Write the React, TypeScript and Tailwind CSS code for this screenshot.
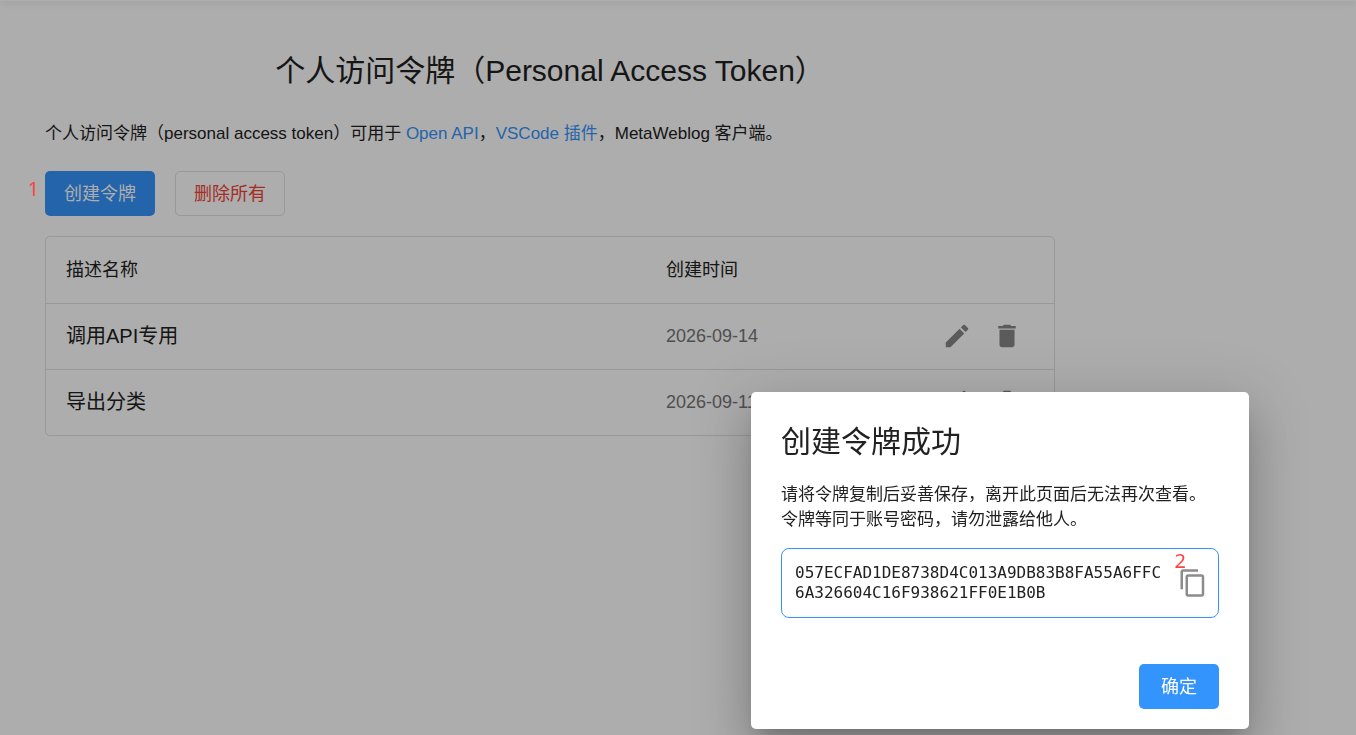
import { useState } from "react";
import { MdContentCopy, MdDelete, MdEdit } from "react-icons/md";

interface Token {
  id: number;
  name: string;
  createdAt: string;
}

const tokens: Token[] = [
  { id: 1, name: "调用API专用", createdAt: "2026-09-14" },
  { id: 2, name: "导出分类", createdAt: "2026-09-11" },
];

const newToken = "057ECFAD1DE8738D4C013A9DB83B8FA55A6FFC6A326604C16F938621FF0E1B0B";

function TokenTable() {
  return (
    <div className="mt-5 rounded-[5px] border border-[#e0e0e0]">
      <table className="w-full table-fixed border-collapse text-left">
        <thead>
          <tr className="h-[66px] border-b border-[#e0e0e0] text-lg">
            <th className="w-[600px] px-5 font-normal">描述名称</th>
            <th className="px-5 font-normal">创建时间</th>
            <th className="w-40" aria-label="操作" />
          </tr>
        </thead>
        <tbody>
          {tokens.map((token) => (
            <tr key={token.id} className="h-[66px] border-b border-[#e0e0e0] last:border-b-0">
              <td className="px-5 text-xl">{token.name}</td>
              <td className="px-5 text-lg text-[#757575]">{token.createdAt}</td>
              <td className="pr-8">
                <div className="flex justify-end gap-5 text-[#868686]">
                  <button type="button" aria-label="编辑">
                    <MdEdit size={30} />
                  </button>
                  <button type="button" aria-label="删除">
                    <MdDelete size={30} />
                  </button>
                </div>
              </td>
            </tr>
          ))}
        </tbody>
      </table>
    </div>
  );
}

function CreatedDialog({ onClose }: { onClose: () => void }) {
  return (
    <>
      <div className="fixed inset-0 bg-black/32" />
      <div
        role="dialog"
        aria-labelledby="dialog-title"
        className="fixed right-[107px] bottom-[6px] w-[498px] rounded-[5px] bg-white px-[30px] pt-[30px] pb-5 shadow-[0_14px_19px_-9px_rgba(0,0,0,0.2),0_30px_48px_4px_rgba(0,0,0,0.14),0_11px_58px_10px_rgba(0,0,0,0.12)]"
      >
        <h2 id="dialog-title" className="text-[30px] leading-10">
          创建令牌成功
        </h2>
        <p className="mt-5 text-[17px] leading-[25px]">
          请将令牌复制后妥善保存，离开此页面后无法再次查看。
          <br />
          令牌等同于账号密码，请勿泄露给他人。
        </p>

        {/* Token value */}
        <div className="relative mt-4 flex items-center gap-3 rounded-lg border border-[#3494fd] py-[14px] pr-[10px] pl-[13px]">
          <code className="min-w-0 flex-1 font-['DejaVu_Sans_Mono',monospace] text-base leading-5 break-all">
            {newToken}
          </code>
          <button type="button" aria-label="复制" className="text-[#8c8c8c]">
            <MdContentCopy size={30} />
          </button>
          <span className="absolute top-0 right-8 font-['Noto_Sans',sans-serif] text-xl leading-6 text-[#ff4040]">
            2
          </span>
        </div>

        <div className="mt-[46px] flex justify-end">
          <button
            type="button"
            onClick={onClose}
            className="h-[45px] w-20 rounded-[5px] bg-[#3494fd] text-lg text-white"
          >
            确定
          </button>
        </div>
      </div>
    </>
  );
}

export default function App() {
  const [open, setOpen] = useState(true);

  return (
    <div className="min-h-screen bg-white font-['Liberation_Sans','Noto_Sans_CJK_SC',sans-serif] text-[#212121]">
      <header className="h-px bg-white shadow-[0_2px_5px_rgba(0,0,0,0.2),0_1px_12px_rgba(0,0,0,0.14)]" />

      <main className="mx-[45px] max-w-[1010px] pt-[50px]">
        <h1 className="text-center text-[30px] leading-10">个人访问令牌（Personal Access Token）</h1>
        <p className="mt-[30px] text-[17px] leading-[25px]">
          个人访问令牌（personal access token）可用于{" "}
          <a href="#openapi" className="text-[#3494fd]">
            Open API
          </a>
          ，
          <a href="#vscode" className="text-[#3494fd]">
            VSCode 插件
          </a>
          ，MetaWeblog 客户端。
        </p>

        <div className="relative mt-[25px] flex gap-5">
          <button
            type="button"
            onClick={() => setOpen(true)}
            className="h-[45px] w-[110px] rounded-[5px] bg-[#3494fd] text-lg text-white"
          >
            创建令牌
          </button>
          <button
            type="button"
            className="h-[45px] w-[110px] rounded-[5px] border border-[#e0e0e0] text-lg text-[#f44336]"
          >
            删除所有
          </button>
          <span className="absolute top-[6px] right-full z-10 mr-[6px] font-['Noto_Sans',sans-serif] text-xl leading-6 text-[#ff4040]">
            1
          </span>
        </div>

        <TokenTable />
      </main>

      {open && <CreatedDialog onClose={() => setOpen(false)} />}
    </div>
  );
}
